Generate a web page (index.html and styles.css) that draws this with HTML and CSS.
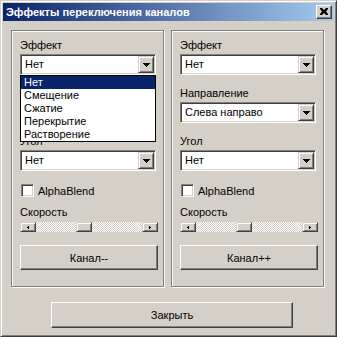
FILE: index.html
```html
<!DOCTYPE html>
<html lang="ru">
<head>
    <meta charset="UTF-8">
    <title>Эффекты переключения каналов</title>
    <link rel="stylesheet" href="styles.css">
</head>
<body>

    <div class="window">
        <!-- Title bar -->
        <div class="titlebar">
            <span class="title">Эффекты переключения каналов</span>
            <span class="close-box">
                <svg width="8" height="7" viewBox="0 0 8 7"><path d="M0 0h2l2 2 2-2h2v1l-2 2.5 2 2.5v1h-2l-2-2-2 2h-2v-1l2-2.5-2-2.5z" fill="#000"/></svg>
            </span>
        </div>

        <div class="content">
            <div class="groups">
                <!-- Previous channel -->
                <div class="group">
                    <div class="label">Эффект</div>
                    <div class="field">
                        <div class="combo">
                            <span class="combo-text">Нет</span>
                            <span class="combo-btn"><svg width="7" height="4" viewBox="0 0 7 4"><path d="M0 0h7v1h-1v1h-1v1h-1v1h-1v-1h-1v-1h-1v-1h-1z"/></svg></span>
                        </div>
                        <ul class="dropdown">
                            <li class="selected">Нет</li>
                            <li>Смещение</li>
                            <li>Сжатие</li>
                            <li>Перекрытие</li>
                            <li>Растворение</li>
                        </ul>
                    </div>
                    <div class="spacer"></div>
                    <div class="label label-gap">Угол</div>
                    <div class="combo">
                        <span class="combo-text">Нет</span>
                        <span class="combo-btn"><svg width="7" height="4" viewBox="0 0 7 4"><path d="M0 0h7v1h-1v1h-1v1h-1v1h-1v-1h-1v-1h-1v-1h-1z"/></svg></span>
                    </div>
                    <label class="check"><span class="check-box"></span>AlphaBlend</label>
                    <div class="label">Скорость</div>
                    <div class="scroll">
                        <span class="scroll-btn"><svg width="2" height="3" viewBox="0 0 2 3"><path d="M2 0v3h-1v-1h-1v-1h1v-1z"/></svg></span>
                        <span class="scroll-track"><span class="scroll-thumb" style="margin-left: 40px"></span></span>
                        <span class="scroll-btn"><svg width="2" height="3" viewBox="0 0 2 3"><path d="M0 0v3h1v-1h1v-1h-1v-1z"/></svg></span>
                    </div>
                    <button class="btn group-btn">Канал--</button>
                </div>

                <!-- Next channel -->
                <div class="group">
                    <div class="label">Эффект</div>
                    <div class="combo">
                        <span class="combo-text">Нет</span>
                        <span class="combo-btn"><svg width="7" height="4" viewBox="0 0 7 4"><path d="M0 0h7v1h-1v1h-1v1h-1v1h-1v-1h-1v-1h-1v-1h-1z"/></svg></span>
                    </div>
                    <div class="label label-gap">Направление</div>
                    <div class="combo">
                        <span class="combo-text">Слева направо</span>
                        <span class="combo-btn"><svg width="7" height="4" viewBox="0 0 7 4"><path d="M0 0h7v1h-1v1h-1v1h-1v1h-1v-1h-1v-1h-1v-1h-1z"/></svg></span>
                    </div>
                    <div class="label label-gap">Угол</div>
                    <div class="combo">
                        <span class="combo-text">Нет</span>
                        <span class="combo-btn"><svg width="7" height="4" viewBox="0 0 7 4"><path d="M0 0h7v1h-1v1h-1v1h-1v1h-1v-1h-1v-1h-1v-1h-1z"/></svg></span>
                    </div>
                    <label class="check"><span class="check-box"></span>AlphaBlend</label>
                    <div class="label">Скорость</div>
                    <div class="scroll">
                        <span class="scroll-btn"><svg width="2" height="3" viewBox="0 0 2 3"><path d="M2 0v3h-1v-1h-1v-1h1v-1z"/></svg></span>
                        <span class="scroll-track"><span class="scroll-thumb" style="margin-left: 40px"></span></span>
                        <span class="scroll-btn"><svg width="2" height="3" viewBox="0 0 2 3"><path d="M0 0v3h1v-1h1v-1h-1v-1z"/></svg></span>
                    </div>
                    <button class="btn group-btn">Канал++</button>
                </div>
            </div>

            <div class="footer">
                <button class="btn close-btn">Закрыть</button>
            </div>
        </div>
    </div>

</body>
</html>
```

FILE: styles.css
```css
/* General Styles */
* {
    margin: 0;
    padding: 0;
    box-sizing: border-box;
}

body {
    font-family: "Liberation Sans", Arial, sans-serif;
    font-size: 11px;
    color: #000;
    background-color: #d4d0c8;
}

.window {
    width: 337px;
    height: 337px;
    padding: 2px;
    background-color: #d4d0c8;
    border: 1px solid;
    border-color: #d4d0c8 #404040 #404040 #d4d0c8;
    box-shadow: inset 1px 1px #fff, inset -1px -1px #808080;
}

/* Title bar */
.titlebar {
    height: 18px;
    display: flex;
    align-items: center;
    justify-content: space-between;
    padding: 0 2px 0 3px;
    background: linear-gradient(to right, #0a246a, #a6caf0);
    color: #fff;
}

.title {
    font-weight: bold;
    font-size: 11px;
}

.close-box {
    width: 16px;
    height: 14px;
    display: flex;
    align-items: center;
    justify-content: center;
    background-color: #d4d0c8;
    border: 1px solid;
    border-color: #fff #404040 #404040 #fff;
    box-shadow: inset -1px -1px #808080;
}

.close-box svg {
    margin: 0 1px 1px 0;
}

/* Content */
.content {
    padding: 9px 9px 0 8px;
}

.groups {
    display: flex;
    gap: 7px;
}

.group {
    width: 153px;
    height: 257px;
    padding: 8px 7px 0 8px;
    display: flex;
    flex-direction: column;
    border: 1px solid #808080;
    box-shadow: inset 1px 1px #fff, 1px 1px #fff;
}

.label {
    height: 13px;
    line-height: 13px;
    flex-shrink: 0;
}

.label-gap {
    margin-top: 12px;
}

.spacer {
    height: 48px;
    flex-shrink: 0;
}

.field {
    position: relative;
}

/* Combobox */
.combo {
    width: 136px;
    height: 21px;
    margin-top: 2px;
    flex-shrink: 0;
    display: flex;
    align-items: center;
    justify-content: space-between;
    padding: 1px;
    background-color: #fff;
    border: 1px solid;
    border-color: #808080 #fff #fff #808080;
    box-shadow: inset 1px 1px #404040, inset -1px -1px #d4d0c8;
}

.combo-text {
    padding-left: 3px;
    line-height: 13px;
}

.combo-btn {
    width: 16px;
    height: 17px;
    display: flex;
    align-items: center;
    justify-content: center;
    background-color: #d4d0c8;
    border: 1px solid;
    border-color: #d4d0c8 #404040 #404040 #d4d0c8;
    box-shadow: inset 1px 1px #fff, inset -1px -1px #808080;
}

.dropdown {
    position: absolute;
    top: 100%;
    left: 0;
    width: 136px;
    list-style: none;
    background-color: #fff;
    border: 1px solid #000;
    z-index: 2;
}

.dropdown li {
    height: 13px;
    line-height: 13px;
    padding-left: 3px;
}

.dropdown .selected {
    background-color: #0a246a;
    color: #fff;
}

/* Checkbox */
.check {
    display: flex;
    align-items: center;
    gap: 4px;
    height: 13px;
    flex-shrink: 0;
    margin: 13px 0 9px 1px;
}

.check-box {
    width: 13px;
    height: 13px;
    background-color: #fff;
    border: 1px solid;
    border-color: #808080 #fff #fff #808080;
    box-shadow: inset 1px 1px #404040, inset -1px -1px #d4d0c8;
}

/* Scrollbar */
.scroll {
    width: 138px;
    height: 10px;
    margin-top: 3px;
    flex-shrink: 0;
    display: flex;
}

.scroll-btn {
    width: 16px;
    height: 10px;
    display: flex;
    align-items: center;
    justify-content: center;
    background-color: #d4d0c8;
    border: 1px solid;
    border-color: #d4d0c8 #404040 #404040 #d4d0c8;
    box-shadow: inset 1px 1px #fff, inset -1px -1px #808080;
}

.scroll-track {
    flex: 1;
    display: flex;
    background-image: conic-gradient(#fff 25%, #d4d0c8 0 50%, #fff 0 75%, #d4d0c8 0);
    background-size: 2px 2px;
}

.scroll-thumb {
    width: 16px;
    height: 10px;
    background-color: #d4d0c8;
    border: 1px solid;
    border-color: #d4d0c8 #404040 #404040 #d4d0c8;
    box-shadow: inset 1px 1px #fff, inset -1px -1px #808080;
}

/* Buttons */
.btn {
    font-family: "Liberation Sans", Arial, sans-serif;
    font-size: 11px;
    color: #000;
    background-color: #d4d0c8;
    border: 1px solid;
    border-color: #fff #404040 #404040 #fff;
    box-shadow: inset -1px -1px #808080;
}

.group-btn {
    width: 138px;
    height: 25px;
    flex-shrink: 0;
    margin-top: 13px;
}

.footer {
    display: flex;
    padding: 15px 0 0 40px;
}

.close-btn {
    width: 242px;
    height: 26px;
}
```
